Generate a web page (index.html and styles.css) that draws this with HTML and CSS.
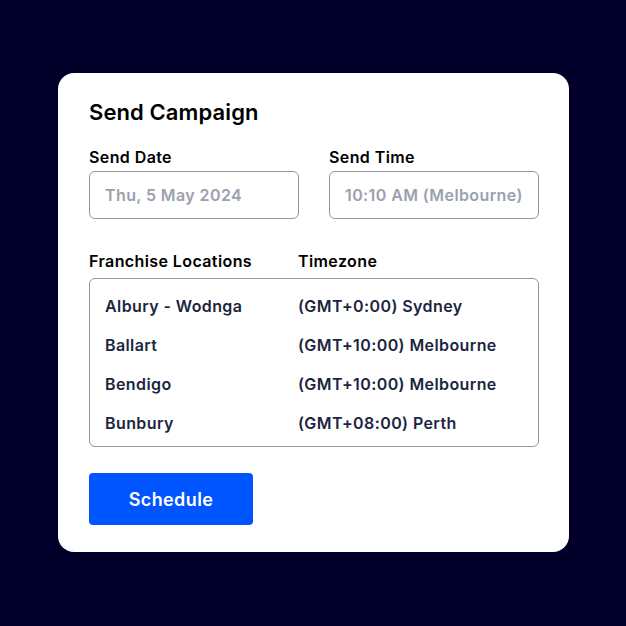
FILE: index.html
```html
<!DOCTYPE html>
<html lang="en">
<head>
    <meta charset="UTF-8">
    <meta name="viewport" content="width=device-width, initial-scale=1.0">
    <title>Send Campaign</title>
    <link rel="stylesheet" href="styles.css">
</head>
<body>
    <div class="campaign-card">
        <h1>Send Campaign</h1>
        <div class="field-row">
            <div class="form-group">
                <label>Send Date</label>
                <div class="field">Thu, 5 May 2024</div>
            </div>
            <div class="form-group">
                <label>Send Time</label>
                <div class="field">10:10 AM (Melbourne)</div>
            </div>
        </div>
        <div class="locations">
            <div class="locations-head">
                <span>Franchise Locations</span>
                <span>Timezone</span>
            </div>
            <div class="locations-list">
                <div class="location-row">
                    <span>Albury - Wodnga</span>
                    <span>(GMT+0:00) Sydney</span>
                </div>
                <div class="location-row">
                    <span>Ballart</span>
                    <span>(GMT+10:00) Melbourne</span>
                </div>
                <div class="location-row">
                    <span>Bendigo</span>
                    <span>(GMT+10:00) Melbourne</span>
                </div>
                <div class="location-row">
                    <span>Bunbury</span>
                    <span>(GMT+08:00) Perth</span>
                </div>
            </div>
        </div>
        <button type="button" class="schedule-btn">Schedule</button>
    </div>
</body>
</html>
```

FILE: styles.css
```css
body {
    font-family: Inter, "Noto Sans", sans-serif;
    background-color: #02002a;
    margin: 0;
    padding: 73px 0 0 58px;
    height: 626px;
    box-sizing: border-box;
    letter-spacing: 0.4px;
}
.campaign-card {
    background: white;
    width: 511px;
    height: 479px;
    box-sizing: border-box;
    border-radius: 16px;
    padding: 24px 30px 24px 31px;
}
h1 {
    font-size: 22px;
    font-weight: 600;
    color: #000;
    margin: 0 0 19px;
    line-height: 30px;
    letter-spacing: 0.1px;
}
.field-row {
    display: flex;
    gap: 30px;
}
.form-group {
    width: 210px;
}
label {
    display: block;
    font-size: 16px;
    font-weight: 600;
    color: #000;
    line-height: 22px;
    margin-bottom: 3px;
}
.field {
    height: 48px;
    box-sizing: border-box;
    border: 1px solid #8e95a3;
    border-radius: 6px;
    padding: 0 15px;
    display: flex;
    align-items: center;
    font-size: 16px;
    font-weight: 600;
    color: #9aa1ae;
    white-space: nowrap;
}
.locations {
    margin-top: 31px;
}
.locations-head,
.location-row {
    display: grid;
    grid-template-columns: 209px 1fr;
}
.locations-head {
    font-size: 16px;
    font-weight: 600;
    color: #000;
    line-height: 22px;
    margin-bottom: 6px;
}
.locations-list {
    border: 1px solid #8e95a3;
    border-radius: 6px;
    height: 169px;
    box-sizing: border-box;
    padding: 16px 15px 0;
}
.location-row {
    grid-template-columns: 193px 1fr;
    font-size: 16px;
    font-weight: 600;
    color: #1b2540;
    line-height: 22px;
    margin-bottom: 17px;
}
.schedule-btn {
    margin-top: 26px;
    width: 164px;
    height: 52px;
    border: none;
    border-radius: 4px;
    background-color: #0055ff;
    color: white;
    font-family: inherit;
    font-size: 18px;
    font-weight: 600;
    letter-spacing: 0.4px;
    cursor: pointer;
}
```
